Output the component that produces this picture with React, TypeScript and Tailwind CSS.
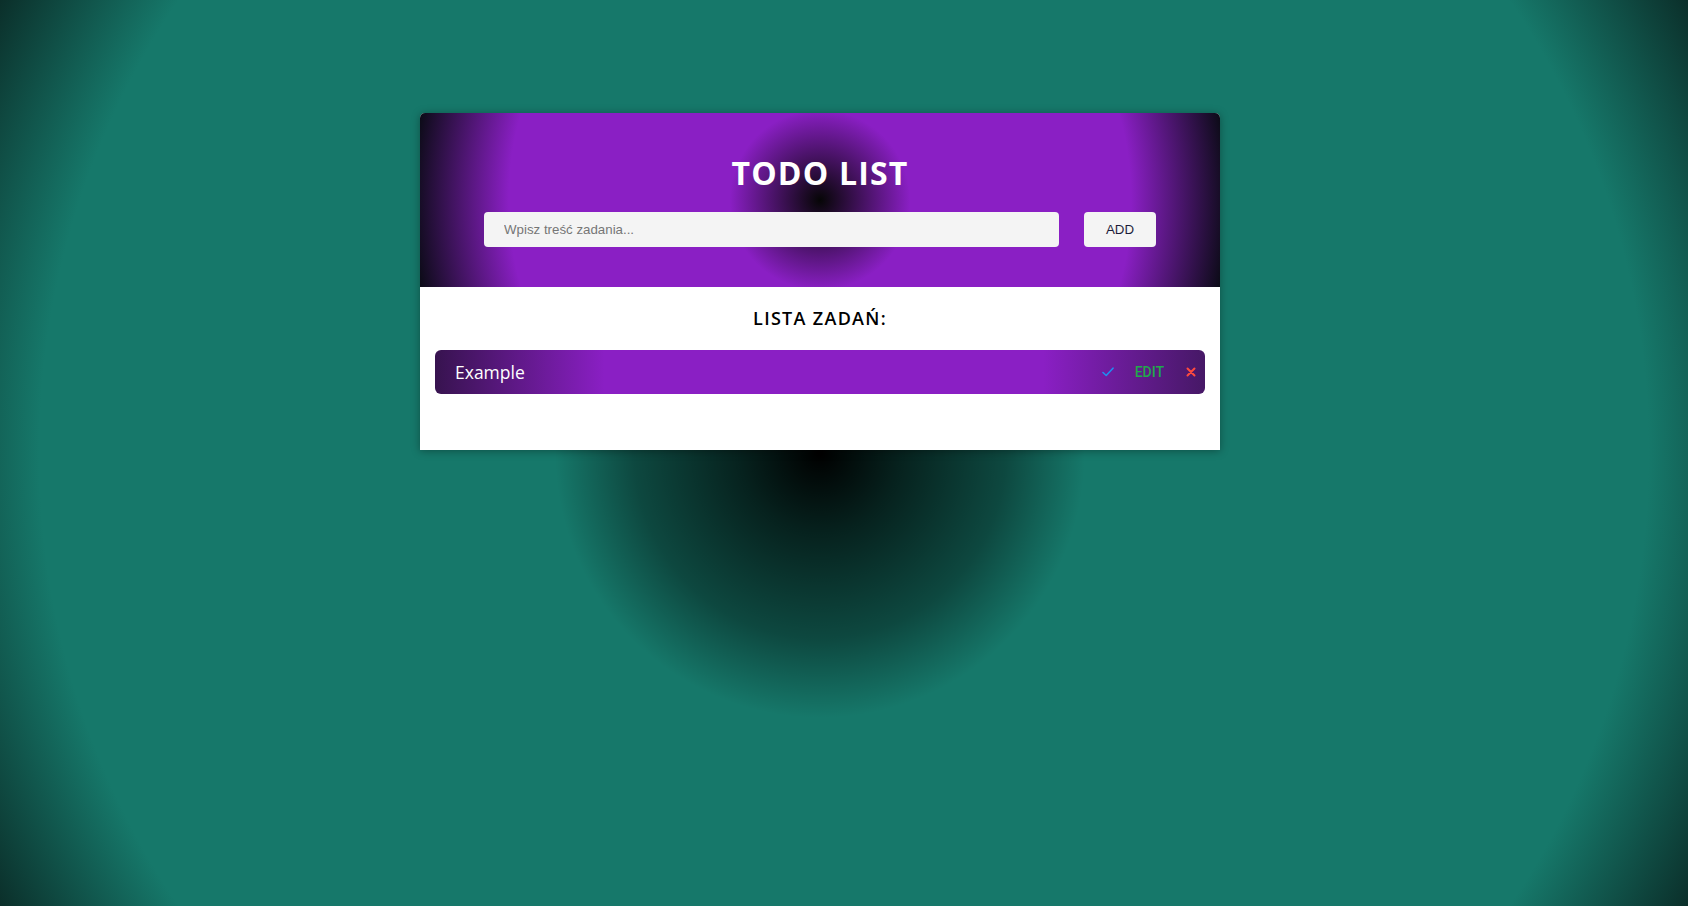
import { useState } from 'react'

type Task = {
  id: number
  text: string
}

const CheckIcon = () => (
  <svg width="12" height="10" viewBox="0 0 12 10" fill="none">
    <polyline points="1,5.5 4.2,8.5 11,1.2" stroke="#1f8ef1" strokeWidth="1.6" strokeLinecap="round" strokeLinejoin="round" />
  </svg>
)

const CloseIcon = () => (
  <svg width="10" height="10" viewBox="0 0 10 10" fill="none">
    <path d="M1.5 1.5 L8.5 8.5 M8.5 1.5 L1.5 8.5" stroke="#ff4b3e" strokeWidth="2" strokeLinecap="round" />
  </svg>
)

function TaskItem({ task }: { task: Task }) {
  return (
    <li className="flex h-[44px] items-center justify-between rounded-md bg-[linear-gradient(to_right,#37134f_0%,#8a1fc4_22%,#8a1fc4_79%,#461866_100%)] pl-5 pr-[9px]">
      <span className="font-['Open_Sans',sans-serif] text-[17.5px] text-white">{task.text}</span>
      <div className="flex items-center">
        <button className="flex items-center">
          <CheckIcon />
        </button>
        <button className="ml-[21px] font-['Roboto',sans-serif] text-[14px] font-medium text-[#22a94b]">EDIT</button>
        <button className="ml-[22px] flex items-center">
          <CloseIcon />
        </button>
      </div>
    </li>
  )
}

export default function App() {
  const [tasks] = useState<Task[]>([{ id: 1, text: 'Example' }])

  return (
    <div className="flex min-h-screen justify-center bg-[radial-gradient(circle_265px_at_820px_453px,#000_0%,rgba(0,0,0,0.72)_30%,rgba(0,0,0,0.4)_70%,rgba(0,0,0,0)_100%),radial-gradient(circle_at_50%_50%,#16786a_0%,#16786a_84%,#0b2f2a_100%)] pr-12 pt-[113px]">
      <div className="h-[337px] w-[800px] overflow-hidden rounded-t-[5px] bg-white shadow-[0_1px_8px_rgba(0,0,0,0.35)]">
        <header className="flex flex-col items-center bg-[radial-gradient(circle,#060606_0%,#8a1fc4_22%,#8a1fc4_76%,#0b0b16_100%)] py-10">
          <h1 className="font-['Open_Sans',sans-serif] text-[32px] leading-[40px] font-bold tracking-[1.2px] text-white">
            TODO LIST
          </h1>
          <form className="mt-[19px] flex gap-[25px]">
            <input
              type="text"
              placeholder="Wpisz treść zadania..."
              className="h-[35px] w-[575px] rounded-[4px] bg-[#f4f4f4] px-5 font-['Liberation_Sans',sans-serif] text-[13.3px] outline-none placeholder:text-[#767676]"
            />
            <button
              type="submit"
              className="h-[35px] w-[72px] rounded-[4px] bg-[#f4f4f4] font-['Liberation_Sans',sans-serif] text-[13.3px] text-[#1c1c3a]"
            >
              ADD
            </button>
          </form>
        </header>

        <section className="px-[15px] pt-[17px]">
          <h2 className="text-center font-['Open_Sans',sans-serif] text-[18px] leading-[28px] font-semibold tracking-[1.3px] text-black">
            LISTA ZADAŃ:
          </h2>
          <ul className="mt-[18px] flex flex-col gap-2">
            {tasks.map((task) => (
              <TaskItem key={task.id} task={task} />
            ))}
          </ul>
        </section>
      </div>
    </div>
  )
}
